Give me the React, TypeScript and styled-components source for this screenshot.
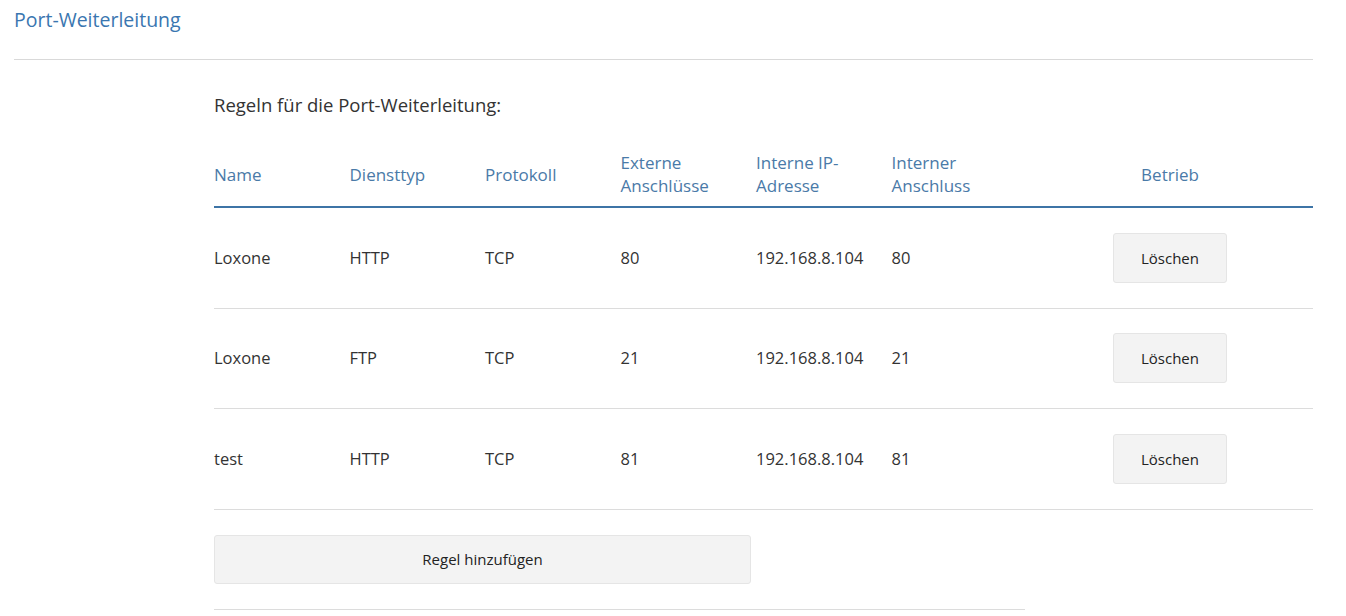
import React from "react";
import styled, { createGlobalStyle } from "styled-components";

const Global = createGlobalStyle`
  html, body { margin: 0; padding: 0; background: #fff; }
  body { font-family: "Open Sans", "Liberation Sans", Arial, sans-serif; color: #333; }
`;

const Page = styled.div`
  padding: 8px 33px 0 14px;
`;

const Title = styled.h1`
  margin: 0;
  font-size: 19.5px;
  line-height: 24px;
  font-weight: 400;
  color: #3a76b0;
`;

const Divider = styled.hr`
  margin: 27px 0 0;
  border: 0;
  border-top: 1px solid #d9d9d9;
`;

const Content = styled.section`
  margin-left: 200px;
  display: flex;
  flex-direction: column;
`;

const Caption = styled.div`
  margin-top: 33px;
  font-size: 18.5px;
  line-height: 24px;
  color: #333;
`;

const Table = styled.div`
  margin-top: 34px;
  display: flex;
  flex-direction: column;
`;

const cols = "135.5px 135.5px 135.5px 135.5px 135.5px 135.5px 1fr";

const HeadRow = styled.div`
  display: grid;
  grid-template-columns: ${cols};
  align-items: center;
  padding-bottom: 9px;
  border-bottom: 2px solid #3d74a6;
`;

const HeadCell = styled.div<{ $center?: boolean }>`
  font-size: 17px;
  line-height: 23px;
  color: #4a7aa8;
  min-height: 46px;
  display: flex;
  align-items: center;
  justify-content: ${(p) => (p.$center ? "center" : "flex-start")};
`;

const Row = styled.div`
  display: grid;
  grid-template-columns: ${cols};
  align-items: center;
  height: 99.5px;
  border-bottom: 1px solid #dcdcdc;
`;

const Cell = styled.div<{ $center?: boolean }>`
  font-size: 16.5px;
  line-height: 22px;
  color: #333;
  display: flex;
  justify-content: ${(p) => (p.$center ? "center" : "flex-start")};
`;

const Button = styled.button<{ $wide?: boolean }>`
  width: ${(p) => (p.$wide ? "537px" : "114px")};
  height: ${(p) => (p.$wide ? "49px" : "50px")};
  background: #f3f3f3;
  border: 1px solid #e5e5e5;
  border-radius: 3px;
  font-family: "Open Sans", "Liberation Sans", Arial, sans-serif;
  font-size: 15px;
  color: #222;
  padding: 0;
  cursor: pointer;
`;

const AddWrap = styled.div`
  margin-top: 25px;
`;

const BottomLine = styled.div`
  margin-top: 25px;
  width: 811px;
  border-top: 1px solid #dcdcdc;
`;

const rules = [
  { name: "Loxone", type: "HTTP", proto: "TCP", ext: "80", ip: "192.168.8.104", port: "80" },
  { name: "Loxone", type: "FTP", proto: "TCP", ext: "21", ip: "192.168.8.104", port: "21" },
  { name: "test", type: "HTTP", proto: "TCP", ext: "81", ip: "192.168.8.104", port: "81" },
];

export default function App() {
  return (
    <Page>
      <Global />
      <Title>Port-Weiterleitung</Title>
      <Divider />
      <Content>
        <Caption>Regeln für die Port-Weiterleitung:</Caption>
        <Table>
          <HeadRow>
            <HeadCell>Name</HeadCell>
            <HeadCell>Diensttyp</HeadCell>
            <HeadCell>Protokoll</HeadCell>
            <HeadCell>Externe<br />Anschlüsse</HeadCell>
            <HeadCell>Interne IP-<br />Adresse</HeadCell>
            <HeadCell>Interner<br />Anschluss</HeadCell>
            <HeadCell $center>Betrieb</HeadCell>
          </HeadRow>
          {rules.map((r, i) => (
            <Row key={i}>
              <Cell>{r.name}</Cell>
              <Cell>{r.type}</Cell>
              <Cell>{r.proto}</Cell>
              <Cell>{r.ext}</Cell>
              <Cell>{r.ip}</Cell>
              <Cell>{r.port}</Cell>
              <Cell $center>
                <Button>Löschen</Button>
              </Cell>
            </Row>
          ))}
        </Table>
        <AddWrap>
          <Button $wide>Regel hinzufügen</Button>
        </AddWrap>
        <BottomLine />
      </Content>
    </Page>
  );
}
